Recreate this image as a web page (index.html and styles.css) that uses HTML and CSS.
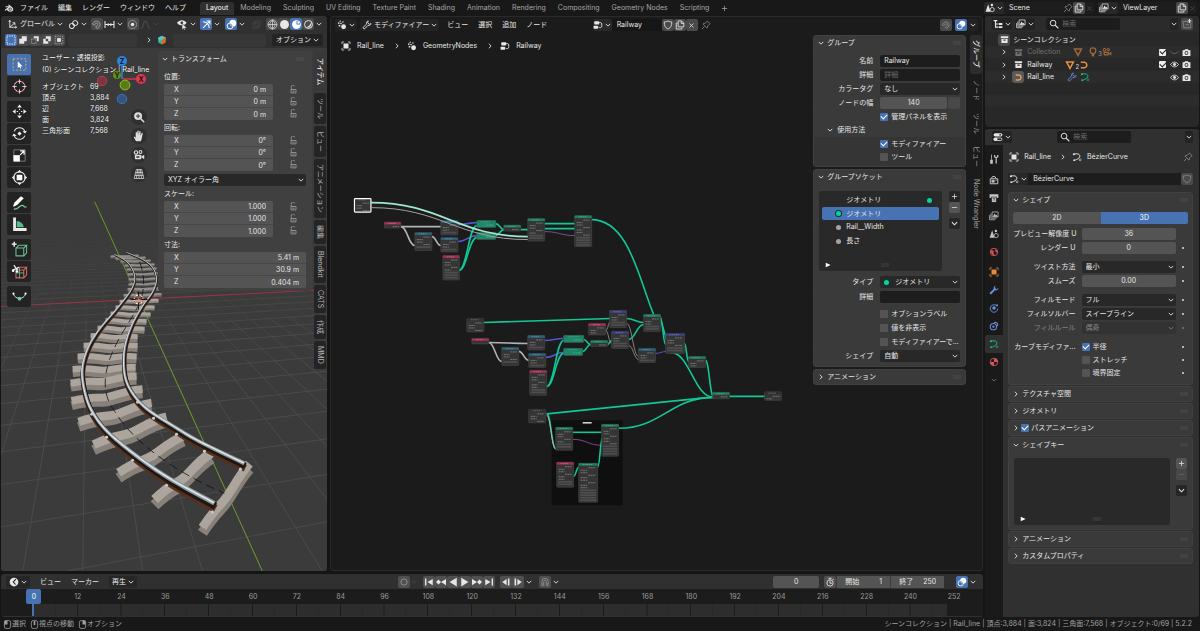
FILE: index.html
```html
<!DOCTYPE html>
<html lang="ja">
<head>
<meta charset="utf-8">
<title>Blender</title>
<link rel="stylesheet" href="styles.css">
</head>
<body>
<svg class="sprite" aria-hidden="true">
  <defs>
  <symbol id="blender" viewBox="0 0 16 16"><path d="M1 11.2 7 6.6H2.6V5.2h6.2L6.6 3.4l1.1-1 5.4 4.2c3.3 2.7 1.6 7.4-3.2 7.4-2.900 0-4.600-1.600-4.900-3.600L2.200 12.400z" fill="currentColor"/><circle cx="9.800" cy="9.700" r="2.600" fill="#181818"/><circle cx="9.800" cy="9.700" r="1.500" fill="currentColor"/></symbol>
  <symbol id="chev" viewBox="0 0 16 16"><path d="M2 5l6 6 6-6" fill="none" stroke="currentColor" stroke-width="2.400"/></symbol>
  <symbol id="chevr" viewBox="0 0 16 16"><path d="M5 2l6 6-6 6" fill="none" stroke="currentColor" stroke-width="2.400"/></symbol>
  <symbol id="axes" viewBox="0 0 16 16"><path d="M4 2v10h10M4 12l7-6M2.500 4 4 2l1.500 2M12 10.500l2 1.500-2 1.500M8 5.500h3.500V9" fill="none" stroke="currentColor" stroke-width="1.300"/></symbol>
  <symbol id="pivot" viewBox="0 0 16 16"><g transform="rotate(-40 8 8)" fill="none" stroke="currentColor" stroke-width="1.400"><circle cx="4.800" cy="8" r="3.600"/><circle cx="11.200" cy="8" r="3.600"/></g><circle cx="8" cy="8" r="1.300" fill="currentColor"/></symbol>
  <symbol id="magnet" viewBox="0 0 16 16"><path d="M2 7 5 4a5 5 0 0 1 7 7l-3 3-2.200-2.200 3-3a1.900 1.900 0 0 0-2.600-2.600l-3 3z" fill="none" stroke="currentColor" stroke-width="1.500"/></symbol>
  <symbol id="magnet2" viewBox="0 0 16 16"><path d="M3 13.500V7a5 5 0 0 1 10 0v6.500h-3V7a2 2 0 0 0-4 0v6.500zM3 11h3M10 11h3" fill="none" stroke="currentColor" stroke-width="1.400"/></symbol>
  <symbol id="incr" viewBox="0 0 16 16"><path d="M1.500 3v10M14.500 3v10M1.500 8h13M6 6v4M10 6v4" fill="none" stroke="currentColor" stroke-width="1.600"/></symbol>
  <symbol id="prop" viewBox="0 0 16 16"><circle cx="8" cy="8" r="6" fill="none" stroke="currentColor" opacity=".6"/><circle cx="8" cy="8" r="2.600" fill="currentColor"/></symbol>
  <symbol id="fall" viewBox="0 0 16 16"><path d="M1 14c5-1 3-11 7-11s2 10 7 11" fill="none" stroke="currentColor" stroke-width="1.500"/></symbol>
  <symbol id="vis" viewBox="0 0 16 16"><path d="M0 5.500c3.500-5 10.500-5 14 0-3.500 5-10.500 5-14 0z" fill="currentColor"/><circle cx="7" cy="5.500" r="1.900" fill="#303030"/><path d="M7.500 6.500l7 6.500-3.500.3 1 2.700h-1.800l-1-2.500-2 2z" fill="currentColor" stroke="#303030" stroke-width=".7"/></symbol>
  <symbol id="gizmo" viewBox="0 0 16 16"><path d="M3 13 12.500 3.500M8 3h5v5M3 4c5 0 9 4 9 9" fill="none" stroke="currentColor" stroke-width="1.600"/></symbol>
  <symbol id="overlay" viewBox="0 0 16 16"><circle cx="10" cy="6" r="4.900" fill="currentColor"/><circle cx="6" cy="10" r="4.300" fill="#4772b3" fill-opacity=".55" stroke="currentColor" stroke-width="1.400"/></symbol>
  <symbol id="xray" viewBox="0 0 16 16"><path d="M5.500 2.500h8v8h-8zM2.500 5.500h8v8h-8z" fill="none" stroke="currentColor"/></symbol>
  <symbol id="wire" viewBox="0 0 16 16"><path d="M8 1.500a6.500 6.500 0 1 0 0 13 6.500 6.500 0 1 0 0-13M1.500 8h13M8 1.500v13M8 1.500c-5 4-5 9 0 13M8 1.500c5 4 5 9 0 13" fill="none" stroke="currentColor"/></symbol>
  <symbol id="solid" viewBox="0 0 16 16"><circle cx="8" cy="8" r="6.500" fill="currentColor"/></symbol>
  <symbol id="matp" viewBox="0 0 16 16"><circle cx="8" cy="8" r="5.800" fill="none" stroke="currentColor" stroke-width="1.400"/><path d="M8 2v6h6a6 6 0 1 1-6-6z" fill="currentColor"/><circle cx="10.500" cy="5.500" r="1.500" fill="currentColor"/></symbol>
  <symbol id="rend" viewBox="0 0 16 16"><circle cx="8" cy="8" r="5.800" fill="none" stroke="currentColor" stroke-width="1.400"/><path d="M12 4a6 6 0 0 1-8 8c4 0 7-4 8-8z" fill="currentColor"/></symbol>
  <symbol id="box" viewBox="0 0 16 16"><rect x="1.500" y="1.500" width="13" height="13" fill="none" stroke="currentColor" stroke-width="1.500" stroke-dasharray="2 1.700"/></symbol>
  <symbol id="m1" viewBox="0 0 16 16"><path d="M6 2h8v8h-4v4H2V6h4z" fill="currentColor"/></symbol>
  <symbol id="m2" viewBox="0 0 16 16"><path d="M6 2h8v8h-3V5H6z" fill="currentColor"/><path d="M2.500 6.500h7v7h-7z" fill="none" stroke="currentColor" stroke-dasharray="1.500"/></symbol>
  <symbol id="m3" viewBox="0 0 16 16"><path d="M6 2h8v8h-4v4H2V6h4zM6 6v4h4V6z" fill="currentColor" fill-rule="evenodd"/></symbol>
  <symbol id="m4" viewBox="0 0 16 16"><rect x="5" y="5" width="6" height="6" fill="currentColor"/><rect x="2" y="2" width="12" height="12" fill="none" stroke="currentColor" stroke-dasharray="1.800"/></symbol>
  <symbol id="tselect" viewBox="0 0 24 24"><rect x="3" y="4" width="18" height="16" fill="none" stroke="#e8b13c" stroke-width="1.300" stroke-dasharray="3 2"/><path d="M9.500 7.500v9.500l2.300-2 1.200 2.700 1.500-.7-1.200-2.600h3z" fill="#fff"/></symbol>
  <symbol id="tcursor" viewBox="0 0 24 24"><circle cx="12" cy="12" r="7.500" fill="none" stroke="#fff" stroke-width="1.400"/><circle cx="12" cy="12" r="7.500" fill="none" stroke="#d9474f" stroke-width="1.400" stroke-dasharray="3 3"/><path d="M12 2v6M12 16v6M2 12h6M16 12h6" stroke="#ddd" stroke-width="1.300"/></symbol>
  <symbol id="tmove" viewBox="0 0 24 24"><path d="M12 2l3.300 4.500H8.700zM12 22l3.300-4.500H8.700zM2 12l4.500 3.300V8.700zM22 12l-4.500 3.300V8.700z" fill="#eee"/><path d="M12 8v2M12 14v2M8 12h2M14 12h2" stroke="#eee" stroke-width="1.500"/></symbol>
  <symbol id="trot" viewBox="0 0 24 24"><path d="M4.500 9a8 8 0 0 1 15 0M19.500 15a8 8 0 0 1-15 0" fill="none" stroke="#eee" stroke-width="1.500"/><path d="M22.500 8l-2.500 4-4-3zM1.500 16l2.500-4 4 3zM12 9l3 3-3 3-3-3z" fill="#eee"/></symbol>
  <symbol id="tscale" viewBox="0 0 24 24"><path d="M4 4h16v16H4z" fill="none" stroke="#999"/><rect x="3.500" y="11.500" width="9" height="9" fill="#fff"/><path d="M13 11l5-5M13 5.500h5.500V11" fill="none" stroke="#fff" stroke-width="1.600"/></symbol>
  <symbol id="ttrans" viewBox="0 0 24 24"><circle cx="12" cy="12" r="8" fill="none" stroke="#eee" stroke-width="1.500"/><rect x="8" y="8" width="8" height="8" rx="1" fill="#fff"/><path d="M12 1l3 4H9zM12 23l3-4H9zM1 12l4 3V9zM23 12l-4 3V9z" fill="#eee"/></symbol>
  <symbol id="tannot" viewBox="0 0 24 24"><path d="M3 17l2-5 9-9 4 3-9 9-5 3z" fill="#fff"/><path d="M4 21c6 2 8-6 12-5s2 4 6 2" fill="none" stroke="#79c798" stroke-width="1.700"/></symbol>
  <symbol id="tmeas" viewBox="0 0 24 24"><path d="M3 2h4v15h15v4H3z" fill="#e9e9e9"/><path d="M8 7a10 10 0 0 1 10 9H8z" fill="#58b98a"/></symbol>
  <symbol id="tadd" viewBox="0 0 24 24"><path d="M7 10h11v11H7zM7 10l4-4h11l-4 4M22 6v11l-4 4" fill="none" stroke="#69bd91" stroke-width="1.500"/><path d="M4.500 1v7M1 4.500h7" stroke="#fff" stroke-width="1.800"/></symbol>
  <symbol id="tcut" viewBox="0 0 24 24"><path d="M7 10h11v11H7zM7 10l4-4h11l-4 4M22 6v11l-4 4" fill="none" stroke="#d0675e" stroke-width="1.500"/><path d="M12 6v15M7 14h11" stroke="#69bd91" stroke-width="1.200"/><path d="M2 10c3-1 6-2 9-4M4 3l5 7" stroke="#fff" stroke-width="1.500"/><circle cx="3" cy="11" r="1.800" fill="#fff"/><circle cx="8.500" cy="12" r="1.800" fill="#fff"/></symbol>
  <symbol id="tpen" viewBox="0 0 24 24"><path d="M3 8c4 9 14 9 18 0" fill="none" stroke="#ddd" stroke-width="1.400"/><circle cx="3.500" cy="8" r="1.500" fill="#fff"/><circle cx="20.500" cy="8" r="1.500" fill="#fff"/><circle cx="12" cy="15" r="2.700" fill="#5fd39b"/></symbol>
  <symbol id="zoomp" viewBox="0 0 16 16"><circle cx="6.800" cy="6.800" r="5.300" fill="currentColor"/><path d="M10.500 10.500 15 15" stroke="currentColor" stroke-width="2"/><path d="M6.800 4v5.600M4 6.800h5.600" stroke="#333" stroke-width="1.300"/></symbol>
  <symbol id="hand" viewBox="0 0 16 16"><path d="M4 15 1 9.500c.6-1 1.600-.6 2.600.7V3.500c.2-1 1.500-1 1.700 0V7l.5-5.500c.3-.9 1.500-.9 1.700 0V7l1-5c.4-.8 1.500-.6 1.600.3L10 7.500l1.500-3.500c.5-.7 1.500-.4 1.500.5L11.500 12 10.500 15z" fill="currentColor"/></symbol>
  <symbol id="mcam" viewBox="0 0 16 16"><g fill="currentColor"><circle cx="4" cy="4.500" r="3"/><circle cx="10" cy="4" r="2.600"/><rect x="2.500" y="7.500" width="8.500" height="6" rx="1"/><path d="M11 10l4-2.500v6L11 11z"/></g><circle cx="4" cy="4.500" r="1.500" fill="#333"/><circle cx="10" cy="4" r="1.200" fill="#333"/><path d="M4.500 9.500h4v2h-4z" fill="#333"/></symbol>
  <symbol id="pgrid" viewBox="0 0 16 16"><path d="M4.500 2h7l3 12h-13zM3.500 6h9M2.500 10h11M8 2v12M6.300 2 4.500 14M9.700 2l1.800 12" fill="none" stroke="currentColor" stroke-width="1"/></symbol>
  <symbol id="lock" viewBox="0 0 16 16"><path d="M4 8V4a3 3 0 0 1 6-1.500M3.500 8h9v6h-9zM6 11h4" fill="none" stroke="currentColor" stroke-width="1.300"/></symbol>
  <symbol id="grip" viewBox="0 0 16 8"><path d="M1 2h14M1 6h14" stroke="currentColor" stroke-width="2" stroke-dasharray="2 2"/></symbol>
  <symbol id="geo" viewBox="0 0 16 16"><g fill="currentColor"><circle cx="10.500" cy="10.800" r="3.900"/><circle cx="4" cy="9" r="1.500"/><circle cx="2.800" cy="5" r="1.300"/><circle cx="6.500" cy="5.500" r="1.300"/><circle cx="5" cy="2" r="1.100"/><circle cx="9.500" cy="3" r="1.200"/></g></symbol>
  <symbol id="wrench" viewBox="0 0 16 16"><path d="M10 1.500c-2.500.5-3.500 3-2.500 5L2 11.500c-1 1.500 1 3.500 2.500 2.500L9.500 8.500c2.500 1 4.800-.5 5-3L12 7 9 4.500z" fill="none" stroke="currentColor" stroke-width="1.400"/></symbol>
  <symbol id="wrenchf" viewBox="0 0 16 16"><path d="M11 1c-3 .3-4.500 3-3.500 5.500L1.500 12c-1 1.800 1 3.500 2.500 2.500l5.500-6c3 1 5.500-1 5.500-4L12 7 9.300 4z" fill="currentColor"/></symbol>
  <symbol id="ntree" viewBox="0 0 16 16"><rect x="2" y="2" width="8" height="5" rx="1" fill="currentColor"/><rect x="1" y="9" width="7" height="5" rx="1" fill="currentColor"/><path d="M10 4c4 0 4 1 4 4s0 5-5 4" fill="none" stroke="currentColor" stroke-width="1.500"/></symbol>
  <symbol id="shield" viewBox="0 0 16 16"><path d="M8 1.500c2 1.300 4 1.500 6 1.500 0 6-1 9-6 11.500C3 12 2 9 2 3c2 0 4-.2 6-1.500z" fill="none" stroke="currentColor" stroke-width="1.300"/></symbol>
  <symbol id="dup" viewBox="0 0 16 16"><path d="M5 4V1.500h5.500L14 5v6H5zM10 1.500V5.500h4M4.500 5H2v9.500h9V12" fill="none" stroke="currentColor" stroke-width="1.400"/></symbol>
  <symbol id="x" viewBox="0 0 16 16"><path d="M3.500 3.500l9 9M12.500 3.500l-9 9" stroke="currentColor" stroke-width="1.800"/></symbol>
  <symbol id="pin" viewBox="0 0 16 16"><path d="M10 1.500 14.500 6l-1.500 1-2.500 2.500V12l-1 1L3 6.500l1-1h2.500L9 3zM5.500 10.500 1.500 14.500" fill="none" stroke="currentColor" stroke-width="1.300"/></symbol>
  <symbol id="obj" viewBox="0 0 16 16"><rect x="4" y="4" width="8" height="8" fill="currentColor"/><path d="M1.500 5V1.500H5M11 1.500h3.500V5M14.500 11v3.500H11M5 14.500H1.500V11" fill="none" stroke="currentColor" stroke-width="1.200"/></symbol>
  <symbol id="plus" viewBox="0 0 16 16"><path d="M8 2v12M2 8h12" stroke="currentColor" stroke-width="1.700"/></symbol>
  <symbol id="minus" viewBox="0 0 16 16"><path d="M2 8h12" stroke="currentColor" stroke-width="1.700"/></symbol>
  <symbol id="conesphere" viewBox="0 0 16 16"><path d="M5 2 9 14H1z" fill="currentColor"/><circle cx="11.500" cy="10.500" r="3.300" fill="none" stroke="currentColor" stroke-width="1.300"/><circle cx="11" cy="3" r="2" fill="currentColor"/></symbol>
  <symbol id="layers" viewBox="0 0 16 16"><path d="M5 1.500h9.500v8H5zM3 4v7.500h9M1 6.500V14h9" fill="none" stroke="currentColor" stroke-width="1.200"/><path d="M6 9l3-5 2 3 1-1 2 3z" fill="currentColor"/></symbol>
  <symbol id="outl" viewBox="0 0 16 16"><path d="M1 2.500h6M4 2.500v10.500h4M4 8h4" fill="none" stroke="currentColor" stroke-width="1.800"/><path d="M9 6.500h6v3H9zM9 11.500h6v3H9z" fill="currentColor"/></symbol>
  <symbol id="search" viewBox="0 0 16 16"><circle cx="6.500" cy="6.500" r="4.500" fill="none" stroke="currentColor" stroke-width="1.500"/><path d="M10 10l5 5" stroke="currentColor" stroke-width="1.700"/></symbol>
  <symbol id="arch" viewBox="0 0 16 16"><path d="M1.500 2h13v3.500h-13zM2.500 6.500h11V14h-11zM6 8v2h4V8z" fill="currentColor" fill-rule="evenodd"/></symbol>
  <symbol id="newcol" viewBox="0 0 16 16"><path d="M1.500 4h7v1.500H14V14H2.500V7h-1zM6 9h5" fill="none" stroke="currentColor" stroke-width="1.200"/><path d="M12 0v6M9 3h6" stroke="#fff" stroke-width="1.300"/></symbol>
  <symbol id="tri" viewBox="0 0 16 16"><path d="M2.500 3h11L8 13.500z" fill="none" stroke="currentColor" stroke-width="2.400"/></symbol>
  <symbol id="bulb" viewBox="0 0 16 16"><circle cx="8" cy="6" r="4.500" fill="none" stroke="currentColor" stroke-width="2"/><path d="M6 11h4v4H6z" fill="currentColor"/></symbol>
  <symbol id="curve" viewBox="0 0 16 16"><path d="M3 3.500h5a4.500 4.500 0 0 1 0 9H3" fill="none" stroke="currentColor" stroke-width="2.400"/></symbol>
  <symbol id="curved" viewBox="0 0 16 16"><path d="M3 3.500c7-2 11 1 9 5-1 2-4 3-7 4.500" fill="none" stroke="currentColor" stroke-width="1.600"/><circle cx="3" cy="3.500" r="1.600" fill="currentColor"/><circle cx="13" cy="12.500" r="1.500" fill="none" stroke="currentColor"/><circle cx="3.500" cy="13" r="1.500" fill="currentColor"/></symbol>
  <symbol id="eye" viewBox="0 0 16 16"><path d="M1 8c3.500-5.500 10.500-5.500 14 0-3.500 5.500-10.500 5.500-14 0z" fill="none" stroke="currentColor" stroke-width="1.600"/><circle cx="8" cy="8" r="2.600" fill="currentColor"/></symbol>
  <symbol id="eyec" viewBox="0 0 16 16"><path d="M1 6c3.500 5 10.500 5 14 0" fill="none" stroke="currentColor" stroke-width="1.500"/></symbol>
  <symbol id="cam" viewBox="0 0 16 16"><path d="M1 4h3l1.500-2h5L12 4h3v10H1z" fill="currentColor"/><circle cx="8" cy="8.800" r="3.400" fill="#2b2b2b"/><circle cx="8" cy="8.800" r="2" fill="currentColor"/></symbol>
  <symbol id="sliders" viewBox="0 0 16 16"><rect x="1" y="2" width="14" height="5" rx="2.500" fill="currentColor"/><rect x="1.600" y="9.600" width="12.800" height="4" rx="2" fill="none" stroke="currentColor" stroke-width="1.300"/><rect x="1" y="9" width="6" height="5" rx="2" fill="currentColor"/><circle cx="11.500" cy="4.500" r="1.500" fill="#2b2b2b"/></symbol>
  <symbol id="tools" viewBox="0 0 16 16"><path d="M4 1v8M2.500 9.500h3V15h-3z" fill="currentColor" stroke="currentColor" stroke-width="1.200"/><path d="M9 1.500v3l2.500 2 2.500-2v-3M11.500 6v9" fill="none" stroke="currentColor" stroke-width="2"/></symbol>
  <symbol id="rtab" viewBox="0 0 16 16"><path d="M2 6h12v8H2zM4 5l1.500-2.500h4L11 5" fill="none" stroke="currentColor" stroke-width="1.600"/><path d="M4.500 8.500h4v3h-4zM10 8.500h2.500" stroke="currentColor" fill="currentColor"/></symbol>
  <symbol id="print" viewBox="0 0 16 16"><path d="M1 2h14v6h-2.500V6h-9v2H1z" fill="currentColor"/><rect x="4.500" y="7" width="7" height="7.500" fill="currentColor"/><path d="M6 9l4 0M6.500 12l1.500-1.500 2 1.500" stroke="#222" fill="none"/></symbol>
  <symbol id="world" viewBox="0 0 16 16"><circle cx="8" cy="8" r="6" fill="none" stroke="currentColor" stroke-width="1.500"/><path d="M3 5l5 1-1 3 2 4-4-1-2-4zM10 3l3 3-1 3-2-2z" fill="currentColor"/></symbol>
  <symbol id="phys" viewBox="0 0 16 16"><circle cx="8" cy="8" r="2.800" fill="currentColor"/><path d="M13 5.500A6 6 0 1 0 14 9" fill="none" stroke="currentColor" stroke-width="1.500"/><circle cx="13" cy="3.500" r="1.500" fill="currentColor"/></symbol>
  <symbol id="cons" viewBox="0 0 16 16"><circle cx="7" cy="9" r="5" fill="none" stroke="currentColor" stroke-width="1.700"/><circle cx="7" cy="9" r="1.800" fill="currentColor"/><path d="M8 2.500c4-2 7 2 5.500 5.500" fill="none" stroke="currentColor" stroke-width="1.700"/></symbol>
  <symbol id="matb" viewBox="0 0 16 16"><circle cx="8" cy="8" r="6" fill="none" stroke="currentColor" stroke-width="1.400"/><path d="M8 8V2a6 6 0 0 1 6 6zM8 8v6a6 6 0 0 1-6-6z" fill="currentColor"/></symbol>
  <symbol id="clock" viewBox="0 0 16 16"><circle cx="8" cy="8" r="7" fill="currentColor"/><path d="M11 3.500 7 8l3.500 4" fill="none" stroke="#222" stroke-width="1.800"/></symbol>
  <symbol id="watch" viewBox="0 0 16 16"><circle cx="8" cy="9.500" r="5" fill="none" stroke="currentColor" stroke-width="1.400"/><path d="M8 6v4h3M5.500 2h5M8 2v2M12 3l2 2" fill="none" stroke="currentColor" stroke-width="1.400"/></symbol>
  <symbol id="rec" viewBox="0 0 16 16"><circle cx="8" cy="8" r="5" fill="none" stroke="currentColor" stroke-width="1.600"/></symbol>
  <symbol id="first" viewBox="0 0 16 16"><path d="M1.500 2.500h2.300v11H1.500zM14 3v10L5.500 8z" fill="currentColor"/></symbol>
  <symbol id="prevk" viewBox="0 0 16 16"><path d="M4 4l4 4-4 4-4-4zM16 3v10L8 8z" fill="currentColor"/></symbol>
  <symbol id="back" viewBox="0 0 16 16"><path d="M14 1v14L2.500 8z" fill="currentColor"/></symbol>
  <symbol id="stepb" viewBox="0 0 16 16"><path d="M9 3v10L2 8zM11 2.500h2.500v11H11z" fill="currentColor"/></symbol>
  <symbol id="mousel" viewBox="0 0 16 16"><rect x="2.500" y="1" width="11" height="14" rx="3" fill="none" stroke="currentColor" stroke-width="1.400"/><path d="M2.500 1H8v7H2.500z" fill="currentColor"/></symbol>
  <symbol id="mousem" viewBox="0 0 16 16"><rect x="2.500" y="1" width="11" height="14" rx="3" fill="none" stroke="currentColor" stroke-width="1.400"/><path d="M6.500 2h3v7h-3z" fill="currentColor"/></symbol>
  <symbol id="mouser" viewBox="0 0 16 16"><rect x="2.500" y="1" width="11" height="14" rx="3" fill="none" stroke="currentColor" stroke-width="1.400"/><path d="M8 1h5.500v7H8z" fill="currentColor"/></symbol>
  <symbol id="play" viewBox="0 0 16 16"><path d="M2 2l13 6-13 6z" fill="currentColor"/></symbol>
  </defs>
</svg>

<header class="topbar">
  <svg class="i"><use href="#blender"/></svg>
  <nav class="menus"><button>ファイル</button><button>編集</button><button>レンダー</button><button>ウィンドウ</button><button>ヘルプ</button></nav>
  <nav class="tabs"><button class="on">Layout</button><button>Modeling</button><button>Sculpting</button><button>UV Editing</button><button>Texture Paint</button><button>Shading</button><button>Animation</button><button>Rendering</button><button>Compositing</button><button>Geometry Nodes</button><button>Scripting</button><button aria-label="追加"><svg class="i s"><use href="#plus"/></svg></button></nav>
  <div class="idbox"><button class="dd"><svg class="i"><use href="#conesphere"/></svg><svg class="c"><use href="#chev"/></svg></button><input aria-label="Scene" value="Scene"><svg class="i dim"><use href="#pin"/></svg><button class="lt" aria-label="複製"><svg class="i"><use href="#dup"/></svg></button><button class="off" aria-label="削除"><svg class="i s"><use href="#x"/></svg></button></div>
  <div class="idbox"><button class="dd"><svg class="i"><use href="#layers"/></svg><svg class="c"><use href="#chev"/></svg></button><input aria-label="ViewLayer" value="ViewLayer"><button class="lt" aria-label="複製"><svg class="i"><use href="#dup"/></svg></button><button class="off" aria-label="削除"><svg class="i s"><use href="#x"/></svg></button></div>
</header>

<main class="work">
<div class="left">
<div class="editors">
<section class="area view3d">
  <div class="hdr v3h">
    <button class="dd"><svg class="i"><use href="#axes"/></svg>グローバル<svg class="c"><use href="#chev"/></svg></button>
    <button class="dd"><svg class="i"><use href="#pivot"/></svg><svg class="c"><use href="#chev"/></svg></button>
    <span class="grp"><button class="lt dim"><svg class="i"><use href="#magnet"/></svg></button><button class="dd"><svg class="i"><use href="#incr"/></svg><svg class="c"><use href="#chev"/></svg></button></span>
    <span class="grp"><button class="lt"><svg class="i"><use href="#prop"/></svg></button><button class="off"><svg class="i"><use href="#fall"/></svg><svg class="c"><use href="#chev"/></svg></button></span>
    <span class="sp"></span>
    <button class="dd"><svg class="i"><use href="#vis"/></svg><svg class="c"><use href="#chev"/></svg></button>
    <span class="grp"><button class="blue"><svg class="i"><use href="#gizmo"/></svg></button><button class="dd"><svg class="c"><use href="#chev"/></svg></button></span>
    <span class="grp"><button class="blue"><svg class="i"><use href="#overlay"/></svg></button><button class="dd"><svg class="c"><use href="#chev"/></svg></button></span>
    <button class="off"><svg class="i"><use href="#xray"/></svg></button>
    <span class="grp"><button class="lt"><svg class="i"><use href="#wire"/></svg></button><button class="lt"><svg class="i"><use href="#solid"/></svg></button><button class="blue"><svg class="i"><use href="#matp"/></svg></button><button class="lt"><svg class="i"><use href="#rend"/></svg></button><button class="dd"><svg class="c"><use href="#chev"/></svg></button></span>
  </div>
  <div class="hdr toolh">
    <span class="grp modes"><button class="blue"><svg class="i"><use href="#box"/></svg></button><button class="lt"><svg class="i"><use href="#m1"/></svg></button><button class="lt"><svg class="i"><use href="#m2"/></svg></button><button class="lt"><svg class="i"><use href="#m3"/></svg></button><button class="lt"><svg class="i"><use href="#m4"/></svg></button></span>
    <span class="slot"></span>
    <svg class="c"><use href="#chevr"/></svg>
    <svg class="i" viewBox="0 0 16 16"><path d="M8 1 2 4v8l6 3z" fill="#29b98d"/><path d="M8 1l6 3v4L8 8 3 9 2 4z" fill="#4fc7c9"/><path d="M14 4v8l-6 3-1-7z" fill="#e8622c"/></svg>
    <span class="slot wide"></span>
    <button class="dark">オプション <svg class="c"><use href="#chev"/></svg></button>
  </div>
  <div class="canvas3d">
    <svg class="scene" id="viewport" viewBox="1 48 327 524" preserveAspectRatio="xMidYMid slice"></svg>
    <div class="toolbar">
      <div><button class="blue"><svg><use href="#tselect"/></svg></button><button><svg><use href="#tcursor"/></svg></button></div>
      <div><button><svg><use href="#tmove"/></svg></button><button><svg><use href="#trot"/></svg></button><button><svg><use href="#tscale"/></svg></button><button><svg><use href="#ttrans"/></svg></button></div>
      <div><button><svg><use href="#tannot"/></svg></button><button><svg><use href="#tmeas"/></svg></button></div>
      <div><button><svg><use href="#tadd"/></svg></button><button><svg><use href="#tcut"/></svg></button></div>
      <div><button><svg><use href="#tpen"/></svg></button></div>
    </div>
    <div class="info">
      <p>ユーザー・透視投影</p><p>(0) シーンコレクション | Rail_line</p>
      <dl><dt>オブジェクト</dt><dd>69</dd><dt>頂点</dt><dd>3,884</dd><dt>辺</dt><dd>7,668</dd><dt>面</dt><dd>3,824</dd><dt>三角形面</dt><dd>7,568</dd></dl>
    </div>
    <div class="nav">
      <svg class="axis" viewBox="0 0 54 56"><path d="M26 27 43 27" stroke="#d1364d" stroke-width="1.500"/><path d="M25 27V12" stroke="#3084de" stroke-width="1.500"/><circle cx="5" cy="29" r="4.700" fill="#7a3640" stroke="#c03a4c"/><circle cx="20" cy="23" r="4" fill="#5f8e14"/><circle cx="28" cy="33" r="4.900" fill="#5b7a1a" stroke="#8dc41a"/><circle cx="25" cy="47" r="4.700" fill="#34557f" stroke="#3a74bb"/><circle cx="25" cy="9" r="5" fill="#2f83e3"/><circle cx="44" cy="27" r="5" fill="#e0364f"/><text x="25" y="12">Z</text><text x="44" y="30">X</text><text x="20" y="26">Y</text></svg>
      <button><svg class="i"><use href="#zoomp"/></svg></button><button><svg class="i"><use href="#hand"/></svg></button><button><svg class="i"><use href="#mcam"/></svg></button><button><svg class="i"><use href="#pgrid"/></svg></button>
    </div>
    <aside class="side3d">
      <h3><svg class="c"><use href="#chev"/></svg>トランスフォーム<svg class="grip"><use href="#grip"/></svg></h3>
      <h4>位置:</h4>
      <div class="vec"><div><label><span>X</span><input value="0 m"></label><label><span>Y</span><input value="0 m"></label><label><span>Z</span><input value="0 m"></label></div><div class="locks"><svg><use href="#lock"/></svg><svg><use href="#lock"/></svg><svg><use href="#lock"/></svg></div></div>
      <h4>回転:</h4>
      <div class="vec"><div><label><span>X</span><input value="0°"></label><label><span>Y</span><input value="0°"></label><label><span>Z</span><input value="0°"></label></div><div class="locks"><svg><use href="#lock"/></svg><svg><use href="#lock"/></svg><svg><use href="#lock"/></svg></div></div>
      <span class="sel top2"><select aria-label="回転モード"><option>XYZ オイラー角</option></select><svg class="c"><use href="#chev"/></svg></span>
      <h4>スケール:</h4>
      <div class="vec"><div><label><span>X</span><input value="1.000"></label><label><span>Y</span><input value="1.000"></label><label><span>Z</span><input value="1.000"></label></div><div class="locks"><svg><use href="#lock"/></svg><svg><use href="#lock"/></svg><svg><use href="#lock"/></svg></div></div>
      <h4>寸法:</h4>
      <div class="vec"><div><label><span>X</span><input value="5.41 m"></label><label><span>Y</span><input value="30.9 m"></label><label><span>Z</span><input value="0.404 m"></label></div></div>
    </aside>
    <nav class="vtabs v3t"><button class="on">アイテム</button><button>ツール</button><button>ビュー</button><button>アニメーション</button><button>編集</button><button>Blendkit</button><button>CATS</button><button>作成</button><button>MMD</button></nav>
  </div>
</section>

<section class="area nodes">
  <svg class="scene" id="graph" viewBox="331 16 652 556" preserveAspectRatio="xMidYMid slice"></svg>
  <div class="hdr nh">
    <button class="dark"><svg class="i"><use href="#geo"/></svg><svg class="c"><use href="#chev"/></svg></button>
    <button class="dark"><svg class="i"><use href="#wrench"/></svg>モディファイアー<svg class="c"><use href="#chev"/></svg></button>
    <nav class="menus"><button>ビュー</button><button>選択</button><button>追加</button><button>ノード</button></nav>
    <span class="sp a"></span>
    <div class="idbox"><button class="dd"><svg class="i"><use href="#ntree"/></svg><svg class="c"><use href="#chev"/></svg></button><input aria-label="ノードツリー" value="Railway"><button class="lt"><svg class="i"><use href="#shield"/></svg></button><button class="lt"><svg class="i"><use href="#dup"/></svg></button><button class="lt"><svg class="i s"><use href="#x"/></svg></button></div>
    <svg class="i dim"><use href="#pin"/></svg>
    <span class="sp b"></span>
    <button class="lt dim"><svg class="i"><use href="#magnet"/></svg></button>
    <span class="grp"><button class="blue"><svg class="i"><use href="#overlay"/></svg></button><button class="dd"><svg class="c"><use href="#chev"/></svg></button></span>
  </div>
  <div class="nbody">
    <div class="crumbs"><svg class="i"><use href="#obj"/></svg>Rail_line<svg class="c"><use href="#chevr"/></svg><svg class="i"><use href="#geo"/></svg>GeometryNodes<svg class="c"><use href="#chevr"/></svg><svg class="i"><use href="#ntree"/></svg>Railway</div>
    <aside class="nside">
      <div class="panel"><h3><svg class="c"><use href="#chev"/></svg>グループ<svg class="grip"><use href="#grip"/></svg></h3>
        <div class="form">
          <label for="nm">名前</label><input id="nm" class="txt" value="Railway">
          <label for="ds">詳細</label><input id="ds" class="txt" placeholder="詳細">
          <label for="ct">カラータグ</label><span class="sel"><select id="ct"><option>なし</option></select><svg class="c"><use href="#chev"/></svg></span>
          <label for="nw">ノードの幅</label><span class="numx"><input id="nw" class="num" value="140"><button aria-label="リセット"></button></span>
          <label class="chk f"><input type="checkbox" checked>管理パネルを表示</label>
        </div>
        <h4 class="sub"><svg class="c"><use href="#chev"/></svg>使用方法</h4>
        <div class="form well"><label class="chk f"><input type="checkbox" checked>モディファイアー</label><label class="chk f"><input type="checkbox">ツール</label></div>
      </div>
      <div class="panel"><h3><svg class="c"><use href="#chev"/></svg>グループソケット<svg class="grip"><use href="#grip"/></svg></h3>
        <div class="listrow"><div class="list"><ul><li><i class="no"></i>ジオメトリ<i class="gr end"></i></li><li class="on"><i class="gr"></i>ジオメトリ</li><li><i></i>Rail__Width</li><li><i></i>長さ</li></ul><footer><svg class="c"><use href="#play"/></svg><svg class="grip"><use href="#grip"/></svg></footer></div>
        <div class="lbtns"><button class="dk"><svg class="i s"><use href="#plus"/></svg></button><button><svg class="i s"><use href="#minus"/></svg></button><button class="dk sepd"><svg class="i s"><use href="#chev"/></svg></button></div></div>
        <div class="form">
          <label for="tp">タイプ</label><span class="sel ico"><select id="tp"><option>ジオメトリ</option></select><i class="gr"></i><svg class="c"><use href="#chev"/></svg></span>
          <label for="d2" class="t1">詳細</label><input id="d2" class="txt t1">
          <label class="chk f t5"><input type="checkbox">オプションラベル</label><label class="chk f">
          <input type="checkbox">値を非表示</label><label class="chk f"><input type="checkbox">モディファイアーで...</label>
          <label for="sh">シェイプ</label><span class="sel"><select id="sh"><option>自動</option></select><svg class="c"><use href="#chev"/></svg></span>
        </div>
      </div>
      <div class="panel shut"><h3><svg class="c"><use href="#chevr"/></svg>アニメーション<svg class="grip"><use href="#grip"/></svg></h3></div>
    </aside>
    <nav class="vtabs nt"><button class="on">グループ</button><button>ノード</button><button>ツール</button><button>ビュー</button><button>Node Wrangler</button></nav>
  </div>
</section>
</div>

<section class="area timeline">
  <div class="hdr th">
    <button class="dark"><svg class="i"><use href="#clock"/></svg><svg class="c"><use href="#chev"/></svg></button>
    <nav class="menus"><button>ビュー</button><button>マーカー</button></nav><button class="dark">再生 <svg class="c"><use href="#chev"/></svg></button>
    <span class="sp a"></span>
    <span class="grp"><button class="lt dim"><svg class="i"><use href="#rec"/></svg></button><button class="off"><svg class="c"><use href="#chev"/></svg></button></span>
    <span class="grp"><button class="lt"><svg class="i"><use href="#first"/></svg></button><button class="lt"><svg class="i"><use href="#prevk"/></svg></button><button class="lt"><svg class="i"><use href="#back"/></svg></button><button class="lt"><svg class="i flip"><use href="#back"/></svg></button><button class="lt"><svg class="i flip"><use href="#prevk"/></svg></button><button class="lt"><svg class="i flip"><use href="#first"/></svg></button></span>
    <span class="grp"><button class="lt"><svg class="i"><use href="#stepb"/></svg></button><button class="lt"><svg class="i flip"><use href="#stepb"/></svg></button><button class="dd"><svg class="c"><use href="#chev"/></svg></button></span>
    <span class="grp"><button class="lt dim"><svg class="i"><use href="#magnet2"/></svg></button><button class="dd"><svg class="c"><use href="#chev"/></svg></button></span>
    <span class="sp b"></span>
    <input class="num w46" aria-label="現在のフレーム" value="0">
    <span class="grp"><button class="lt"><svg class="i"><use href="#watch"/></svg></button><label class="fr">開始<input value="1"></label><label class="fr">終了<input value="250"></label></span>
    <span class="grp"><button class="blue"><svg class="i"><use href="#overlay"/></svg></button><button class="dd"><svg class="c"><use href="#chev"/></svg></button></span>
  </div>
  <div class="ruler" id="ruler"></div>
</section>
</div>

<div class="right">
<section class="area outliner">
  <div class="hdr oh"><button class="dark"><svg class="i"><use href="#outl"/></svg><svg class="c"><use href="#chev"/></svg></button><button class="dark"><svg class="i"><use href="#layers"/></svg><svg class="c"><use href="#chev"/></svg></button><label class="srch"><svg class="i"><use href="#search"/></svg><input placeholder="検索" aria-label="検索"></label><button class="dark"><svg class="c"><use href="#chev"/></svg></button><button class="lt dim"><svg class="i"><use href="#newcol"/></svg></button></div>
  <div class="tree">
    <div class="row"><span class="ib"><svg class="i"><use href="#arch"/></svg></span>シーンコレクション</div>
    <div class="row child"><svg class="c"><use href="#chevr"/></svg><span class="ib faint"><svg class="i"><use href="#arch"/></svg></span><span class="faint nm">Collection</span><span class="or faded"><svg class="i"><use href="#tri"/></svg></span><span class="or faded"><svg class="i"><use href="#bulb"/></svg><sub>3</sub><svg class="i"><use href="#mcam"/></svg></span><span class="tg"><input type="checkbox" checked aria-label="除外"><svg class="i faint"><use href="#eyec"/></svg><svg class="i"><use href="#cam"/></svg></span></div>
    <div class="row child"><svg class="c"><use href="#chevr"/></svg><span class="ib"><svg class="i"><use href="#arch"/></svg></span><span class="nm">Railway</span><span class="or"><svg class="i"><use href="#tri"/></svg><sub>2</sub><svg class="i"><use href="#curve"/></svg></span><span class="tg"><input type="checkbox" checked aria-label="除外"><svg class="i"><use href="#eye"/></svg><svg class="i"><use href="#cam"/></svg></span></div>
    <div class="row child"><svg class="c"><use href="#chevr"/></svg><span class="ib act"><svg class="i"><use href="#curve"/></svg></span><span class="nm">Rail_line</span><span class="bl"><svg class="i"><use href="#wrench"/></svg></span><span class="gn"><svg class="i"><use href="#curved"/></svg></span><span class="tg"><svg class="i"><use href="#eye"/></svg><svg class="i"><use href="#cam"/></svg></span></div>
    <div class="row"></div><div class="row"></div><div class="row"></div>
  </div>
</section>
<section class="area props">
  <div class="hdr ph"><button class="dark"><svg class="i"><use href="#sliders"/></svg><svg class="c"><use href="#chev"/></svg></button><label class="srch"><svg class="i"><use href="#search"/></svg><input placeholder="検索" aria-label="検索"></label><button class="dark"><svg class="c"><use href="#chev"/></svg></button></div>
  <div class="pbody">
    <nav class="ptabs"><button><svg class="i"><use href="#tools"/></svg></button><button class="gap"><svg class="i"><use href="#rtab"/></svg></button><button><svg class="i"><use href="#print"/></svg></button><button><svg class="i"><use href="#layers"/></svg></button><button><svg class="i"><use href="#conesphere"/></svg></button><button class="rd"><svg class="i"><use href="#world"/></svg></button><button class="orr gap2"><svg class="i"><use href="#obj"/></svg></button><button class="bl"><svg class="i"><use href="#wrenchf"/></svg></button><button class="bl"><svg class="i"><use href="#phys"/></svg></button><button class="bl"><svg class="i"><use href="#cons"/></svg></button><button class="gn on"><svg class="i"><use href="#curved"/></svg></button><button class="rd"><svg class="i"><use href="#matb"/></svg></button><button class="faint"><svg class="c"><use href="#chev"/></svg></button></nav>
    <div class="pmain">
      <div class="crumbs"><svg class="i"><use href="#obj"/></svg>Rail_line<svg class="c"><use href="#chevr"/></svg><svg class="i"><use href="#curved"/></svg>BézierCurve<svg class="i dim push"><use href="#pin"/></svg></div>
      <div class="idbox big"><button class="dd"><svg class="i"><use href="#curved"/></svg><svg class="c"><use href="#chev"/></svg></button><input aria-label="データ名" value="BézierCurve"><button class="lt dim"><svg class="i"><use href="#shield"/></svg></button></div>
      <div class="panel"><h3><svg class="c"><use href="#chev"/></svg>シェイプ<svg class="grip"><use href="#grip"/></svg></h3>
        <div class="seg"><button>2D</button><button class="on">3D</button></div>
        <div class="pform">
          <label for="p1">プレビュー解像度 U</label><input id="p1" class="num" value="36"><b></b>
          <label for="p2">レンダー U</label><input id="p2" class="num" value="0"><b class="dot"></b>
          <hr>
          <label for="p3">ツイスト方法</label><span class="sel"><select id="p3"><option>最小</option></select><svg class="c"><use href="#chev"/></svg></span><b class="dot"></b>
          <label for="p4">スムーズ</label><input id="p4" class="num" value="0.00"><b class="dot"></b>
          <hr>
          <label for="p5">フィルモード</label><span class="sel"><select id="p5"><option>フル</option></select><svg class="c"><use href="#chev"/></svg></span><b class="dot"></b>
          <label for="p6">フィルソルバー</label><span class="sel"><select id="p6"><option>スイープライン</option></select><svg class="c"><use href="#chev"/></svg></span><b class="dot"></b>
          <label for="p7" class="dis">フィルルール</label><span class="sel dis"><select id="p7"><option>偶奇</option></select><svg class="c"><use href="#chev"/></svg></span><b class="dot dis"></b>
          <hr>
          <span class="lb">カーブモディファ...</span><label class="chk"><input type="checkbox" checked>半径</label><b class="dot"></b>
          <label class="chk f2 up"><input type="checkbox">ストレッチ</label><b class="dot up"></b>
          <label class="chk f2 up"><input type="checkbox">境界固定</label><b class="dot up"></b>
        </div>
      </div>
      <div class="panel shut"><h3><svg class="c"><use href="#chevr"/></svg>テクスチャ空間<svg class="grip"><use href="#grip"/></svg></h3></div>
      <div class="panel shut"><h3><svg class="c"><use href="#chevr"/></svg>ジオメトリ<svg class="grip"><use href="#grip"/></svg></h3></div>
      <div class="panel shut"><h3><svg class="c"><use href="#chevr"/></svg><label class="chk"><input type="checkbox" checked>パスアニメーション</label><svg class="grip"><use href="#grip"/></svg></h3></div>
      <div class="panel"><h3><svg class="c"><use href="#chev"/></svg>シェイプキー<svg class="grip"><use href="#grip"/></svg></h3>
        <div class="listrow keys"><div class="list"><ul></ul><footer><svg class="c"><use href="#play"/></svg><svg class="grip"><use href="#grip"/></svg></footer></div>
        <div class="lbtns"><button><svg class="i s"><use href="#plus"/></svg></button><button class="fade"><svg class="i s"><use href="#minus"/></svg></button><button class="dk sepd"><svg class="i s"><use href="#chev"/></svg></button></div></div>
      </div>
      <div class="panel shut"><h3><svg class="c"><use href="#chevr"/></svg>アニメーション<svg class="grip"><use href="#grip"/></svg></h3></div>
      <div class="panel shut"><h3><svg class="c"><use href="#chevr"/></svg>カスタムプロパティ<svg class="grip"><use href="#grip"/></svg></h3></div>
    </div>
  </div>
</section>
</div>
</main>
<footer class="status"><span class="ms"><svg class="i"><use href="#mousel"/></svg>選択</span><span class="ms"><svg class="i"><use href="#mousem"/></svg>視点の移動</span><span class="ms"><svg class="i"><use href="#mouser"/></svg>オプション</span><span class="stat">シーンコレクション | Rail_line | 頂点:3,884 | 面:3,824 | 三角面:7,568 | オブジェクト:0/69 | 5.2.2</span></footer>
<script src="scene.js"></script>
</body>
</html>
```
FILE: styles.css
```css
* { box-sizing: border-box; }
html, body { height: 100%; margin: 0; }
body { display: flex; flex-direction: column; background: #151515; color: #e6e6e6; font: 7px/12px Inter, "Noto Sans CJK JP", sans-serif; overflow: hidden; }
.sprite { position: absolute; width: 0; height: 0; }
svg { display: block; flex: none; }
button, input, select { font: inherit; color: inherit; background: none; border: 0; margin: 0; padding: 0; min-width: 0; border-radius: 2px; }
h3, h4, p, dl, dd, ul { margin: 0; padding: 0; font-weight: 400; font-size: 7px; }
.i { width: 10px; height: 10px; }
.i.s { width: 7px; height: 7px; }
.c { width: 6px; height: 6px; }
.grip { width: 8px; height: 4px; color: #626262; }
.flip { transform: scaleX(-1); }
.dim { color: #8d8d8d; }
.faint { color: #707070; }
.bl { color: #6a8fe0; }
.gn { color: #1fbf86; }
.rd { color: #d0575c; }
.orr { color: #e08a3c; }
.or { color: #e58f3e; }

.topbar { height: 16px; flex: none; display: flex; align-items: center; padding: 0 3px 0 4px; background: #181818; }
.menus { display: flex; }
.menus button { padding: 0 5px; white-space: nowrap; }
.topbar .menus { margin-left: 1px; margin-right: 9px; }
.tabs { display: flex; margin-right: auto; color: #a6a6a6; }
.tabs button { padding: 0 6px; height: 13px; white-space: nowrap; display: flex; align-items: center; }
.tabs .on { background: #303030; color: #fff; border-radius: 3px 3px 0 0; }
.idbox { display: flex; align-items: center; height: 12px; background: #1d1d1d; border-radius: 2px; }
.topbar .idbox + .idbox { margin-left: 4px; }
.idbox input { width: 59px; padding: 0 5px; }
.idbox .dd { background: #282828; }
.topbar .idbox > button { padding: 0 1px; display: flex; gap: 2px; }
.topbar .idbox:last-child input { width: 58px; }

.work { flex: 1; min-height: 0; display: flex; gap: 2px; padding: 0 1px; }
.left { flex: 983; min-width: 0; display: flex; flex-direction: column; gap: 3px; }
.editors { flex: 1; min-height: 0; display: flex; gap: 3px; }
.right { flex: 214; min-width: 0; display: flex; flex-direction: column; gap: 2px; }
.area { border-radius: 3px; overflow: hidden; position: relative; min-width: 0; }
.hdr { display: flex; align-items: center; height: 16px; padding: 0 3px; gap: 3px; position: relative; flex: none; }
.hdr button, .idbox button { display: flex; align-items: center; justify-content: center; height: 12px; gap: 2px; padding: 0 1px; white-space: nowrap; flex: none; }
.hdr .menus button { padding: 0 5px; }
.lt { background: #4a4a4a; }
.blue { background: #4772b3; color: #fff; }
.dark { background: #232323; }
.hdr .dark { padding: 0 3px; }
.off { color: #4a4a4a; }
.grp { display: flex; align-items: center; gap: 0; }
.grp > .dd { width: 10px; }
.sp { flex: 1; }

.view3d { flex: 327; display: flex; flex-direction: column; background: #303030; }
.v3h .grp > .dd:has(.i) { width: auto; }
.v3h { gap: 3px; padding: 0 3px 0 5px; }
.v3h .i { width: 11px; height: 11px; }
.v3h .grp > .blue, .v3h .grp > .lt { padding: 0; width: 12px; }
.toolh { padding: 0 4px; }
.modes button { width: 12px; }
.slot { flex: 72; height: 13px; background: #373737; border-radius: 3px; }
.slot + .c { margin: 0 2px 0 6px; }
.slot.wide { flex: 98; margin: 0 3px; }
.toolh .dark { padding: 0 4px; }
.canvas3d { flex: 1; position: relative; display: flex; align-items: flex-start; background: #3b3b3b; }
.scene { position: absolute; inset: 0; width: 100%; height: 100%; }
.toolbar { position: relative; margin: 6px 0 0 6px; display: flex; flex-direction: column; gap: 4px; }
.toolbar div { display: flex; flex-direction: column; gap: 1px; }
.toolbar button { width: 24px; height: 21px; display: flex; align-items: center; justify-content: center; background: #232323; }
.toolbar button.blue { background: #4772b3; }
.toolbar svg { width: 17px; height: 17px; }
.info { position: relative; flex: none; margin: 4px 0 0 11px; white-space: nowrap; width: 116px; color: #fff; text-shadow: 0 0 1px #000; }
.info dl { display: grid; grid-template-columns: 48px auto; line-height: 11px; margin-top: 5px; }
.info p { line-height: 12px; }
.nav { position: absolute; left: 96px; top: 4px; display: flex; flex-direction: column; align-items: center; width: 54px; }
.axis { width: 54px; height: 56px; margin-bottom: 1px; }
.axis text { font: bold 7px Inter, sans-serif; text-anchor: middle; fill: #17181c; }
.nav button { width: 16px; height: 16px; margin: 0 0 3px 29px; border-radius: 8px; background: #2f2f2f; display: flex; align-items: center; justify-content: center; color: #ddd; }
.nav .i { width: 12px; height: 12px; }
.side3d { position: relative; flex: 1; margin: 3px 2px 0 0; padding: 0 6px 3px; background: #404040; border-radius: 3px; min-width: 0; }
.side3d h3 { margin-left: -4px; }
h3 { display: flex; align-items: center; gap: 3px; height: 15px; padding: 0 2px; }
h3 .grip { margin-left: auto; }
.side3d h4 { line-height: 10px; margin: 3px 0 2px; }
.side3d h3 + h4 { margin-top: 6px; }
.vec { display: flex; }
.vec > div:first-child { flex: 1; display: flex; flex-direction: column; }
.vec label { display: flex; height: 12px; line-height: 11px; background: #545454; padding: 0 7px 0 10px; border-bottom: 1px solid #474747; }
.vec label:first-child { border-radius: 2px 2px 0 0; }
.vec label:last-child { border-radius: 0 0 2px 2px; border: 0; }
.vec input { flex: 1; width: 0; text-align: right; }
.locks { flex: none; width: 33px; padding-left: 7px; display: flex; flex-direction: column; align-items: center; gap: 3px; padding-top: 1px; color: #a8a8a8; }
.locks svg { width: 9px; height: 9px; }
.sel { display: grid; align-items: center; height: 12px; background: #282828; border-radius: 2px; min-width: 0; }
.sel > * { grid-area: 1 / 1; }
.sel select { appearance: none; width: 100%; height: 12px; padding: 0 4px; }
.sel .c { justify-self: end; margin-right: 2px; pointer-events: none; }
.top2 { margin-top: 3px; }
.vtabs { position: relative; display: flex; flex-direction: column; gap: 2px; flex: none; }
.vtabs button { writing-mode: vertical-rl; text-orientation: sideways; width: 12px; line-height: 12px; padding: 5px 0; background: #242424; color: #b5b5b5; border-radius: 2px; white-space: nowrap; }
.vtabs .on { background: #404040; color: #fff; }
.v3t { margin: 4px 1px 0 0; }
.v3t .on { background: #383838; padding: 6px 0; }

.nodes { flex: 653; background: #1b1b1b; display: flex; flex-direction: column; border: 1px solid #2a2a2a; }
.nh { padding: 0 4px; }
.nh .dark { padding: 0 2px; }
.nh .idbox { height: 12px; background: #161616; }
.nh .idbox button { width: 12px; }
.nh .idbox .dd { width: 19px; }
.nh .idbox input { width: 50px; }
.nh .sp.a { flex: 35; }
.nh .sp.b { flex: 227; }
.nh .grp .dd { background: #222; width: 11px; }
.nbody { flex: 1; position: relative; display: flex; align-items: flex-start; }
.crumbs { display: flex; align-items: center; gap: 6px; }
.crumbs .c { margin: 0 1px 0 4px; }
.nbody .crumbs { margin: 7px auto 0 10px; }
.nside { flex: none; width: 153px; margin: 2px 2px 0 0; display: flex; flex-direction: column; gap: 2px; }
.panel { background: #3a3a3a; border-radius: 3px; border: 1px solid #414141; }
.panel h3 { height: 14px; padding: 0 4px; gap: 3px; }
.form { display: grid; grid-template-columns: 59px minmax(0, 1fr); gap: 2px 7px; padding: 5px 5px 0 0; align-items: center; text-align: right; }
.form label { height: 12px; white-space: nowrap; }
.form .f { grid-column: 2; }
.chk { display: flex; align-items: center; gap: 3px; height: 12px; white-space: nowrap; text-align: left; }
h3 .chk { gap: 2px; margin-left: -1px; }
input[type="checkbox"] { appearance: none; width: 8px; height: 8px; background: #545454; border-radius: 1px; display: grid; place-items: center; flex: none; }
input[type="checkbox"]:checked { background: #4772b3; }
input[type="checkbox"]:checked::before { content: ""; width: 5px; height: 3px; border: solid #fff; border-width: 0 0 1px 1px; transform: rotate(-45deg); margin-bottom: 2px; }
.txt { height: 12px; background: #1d1d1d; padding: 0 4px; width: 100%; }
::placeholder { color: #6b6b6b; opacity: 1; }
.num { height: 12px; background: #545454; text-align: center; width: 100%; }
.numx { display: flex; gap: 1px; }
.numx button { width: 12px; background: #484848; flex: none; }
.sub { display: flex; align-items: center; gap: 4px; height: 14px; padding-left: 13px; }
.well { padding: 1px 5px 3px 0; row-gap: 1px; background: #353535; }
.listrow { display: flex; gap: 7px; padding: 7px 5px 0; }
.list { flex: 1; height: 80px; background: #292929; border-radius: 2px; padding: 2px 3px 0; display: flex; flex-direction: column; }
.list ul { list-style: none; flex: 1; }
.list li { display: flex; align-items: center; gap: 4px; height: 14px; padding: 0 6px 0 14px; border-radius: 2px; }
.list li.on { background: #4772b3; height: 13px; }
.list i, .sel i { width: 5px; height: 5px; margin-right: 1px; border-radius: 3px; background: #a3a3a3; flex: none; }
.list i.gr, .sel i.gr { background: #00d6a3; box-shadow: 0 0 0 1px #15332b; }
.list i.no { background: none; }
.list i.end { margin-left: auto; box-shadow: none; }
.list footer { display: flex; align-items: center; height: 12px; padding-left: 3px; color: #fff; }
.list footer .grip { margin: 0 auto; }
.lbtns { display: flex; flex-direction: column; width: 11px; }
.lbtns button { height: 11px; display: flex; align-items: center; justify-content: center; background: #545454; }
.lbtns .dk { background: #262626; }
.lbtns .sepd { margin-top: 5px; }
.lbtns .fade { background: #484848; color: #666; }
.sel.ico select { padding-left: 15px; }
.sel.ico i { margin-left: 4px; }
.t1 { margin-top: 1px; }
.t5 { margin-top: 3px; }
.nside .panel:nth-child(2) { padding-bottom: 4px; }
.nt { width: 14px; align-items: flex-end; margin-top: 2px; gap: 1px; }
.nt button { background: none; color: #9a9a9a; padding: 5px 0 6px; }
.nt .on { background: #2c2c2c; }

.timeline { background: #303030; flex: none; height: 43px; }
.th { height: 15px; padding: 0 5px; gap: 5px; }
.th .dark { background: #262626; }
.th .sp.a { flex: 26; }
.th .sp.b { flex: 21; }
.th .i { width: 10px; height: 10px; }
.th .lt { background: #505050; width: 12px; }
.w46 { width: 46px; flex: none; }
.fr { display: flex; align-items: center; height: 12px; background: #545454; padding: 0 8px; width: 54px; border-left: 1px solid #3c3c3c; white-space: nowrap; }
.fr input { width: 10px; flex: 1; text-align: right; }
.th .grp:last-child { margin-left: 7px; }
.ruler { display: grid; grid-template-columns: repeat(22, minmax(0, 1fr)); padding: 0 7px 0 11px; background: #1c1c1c; height: 27px; color: #9b9b9b; text-align: center; }
.tick { display: flex; flex-direction: column; }
.tick span { line-height: 15px; height: 15px; }
.tick i { height: 12px; border-right: 1px solid #292929; background: linear-gradient(90deg, #2d2d2d calc(50% - 1px), #1b1b1b 50%, #2d2d2d calc(50% + 1px)); }
.tick:first-child i { background: linear-gradient(90deg, #1c1c1c 50%, #2d2d2d 50%); }
.tick:last-child i { background: linear-gradient(90deg, #2d2d2d 33%, #1c1c1c 34%); border: 0; }
.tick.now span { align-self: center; width: 15px; background: #4772b3; color: #fff; border-radius: 2px; }
.tick.now i { display: flex; justify-content: center; }
.tick.now i::after { content: ""; width: 2px; background: #4772b3; }

.outliner { height: 111px; background: #282828; flex: none; display: flex; flex-direction: column; }
.oh, .ph { background: #2b2b2b; padding: 0 6px 0 7px; }
.srch { display: flex; align-items: center; gap: 3px; height: 12px; background: #1d1d1d; border-radius: 2px; padding: 0 3px; width: 74px; }
.srch input { flex: 1; }
.oh .srch { margin: 0 auto 0 8px; }
.oh .dark, .ph .dark { padding: 0 1px; }
.ph .srch { margin: 0 auto 0 42px; }
.tree { flex: 1; padding-top: 1px; }
.row { display: flex; align-items: center; height: 12px; padding: 0 8px 0 13px; gap: 3px; }
.row:nth-child(even) { background: #2c2c2c; }
.row.child { padding-left: 16px; gap: 5px; }
.row:first-child { height: 13px; }
.row:nth-child(3) { height: 13px; }
.ib { width: 12px; height: 12px; display: grid; place-items: center; border-radius: 3px; }
.row:first-child .ib { background: #4a4a4a; }
.ib .i { width: 9px; height: 9px; }
.ib.act { background: #5a5a5a; color: #e9a066; }
.nm { margin-left: -2px; }
.row .or, .row .bl, .row .gn { display: flex; align-items: center; margin-left: 8px; }
.row .or + .or { margin-left: 0; }
.row .gn { margin-left: -2px; }
.row sub { font-size: 6px; line-height: 6px; align-self: flex-end; color: #ddd; vertical-align: baseline; }
.faded { opacity: .6; }
.tg { margin-left: auto; display: flex; align-items: center; gap: 3px; }
.tg input[type="checkbox"] { width: 7px; height: 7px; margin-right: 1px; background: #eee; }
.tg input[type="checkbox"]:checked::before { border-color: #222; }
.tg .i { width: 9px; height: 9px; }

.props { flex: 1; background: #303030; display: flex; flex-direction: column; }
.ph { background: #303030; }
.pbody { flex: 1; display: flex; min-height: 0; }
.ptabs { width: 18px; background: #1a1a1a; padding-top: 5px; display: flex; flex-direction: column; flex: none; }
.ptabs button { height: 18px; display: flex; align-items: center; justify-content: center; border-radius: 2px 0 0 2px; }
.ptabs .gap { margin-top: 3px; }
.ptabs .gap2 { margin-top: 2px; }
.ptabs .on { background: #303030; }
.ptabs button:not([class]), .ptabs .gap { color: #c4c4c4; }
.pmain { flex: 1; min-width: 0; padding: 5px 6px 0 5px; display: flex; flex-direction: column; gap: 1px; }
.pmain .crumbs { height: 14px; gap: 5px; padding-left: 1px; }
.push { margin-left: auto; }
.idbox.big { margin: 8px 0 6px; }
.idbox.big input { flex: 1; }
.idbox.big .lt { width: 12px; }
.idbox.big .dd { width: 20px; }
.seg { display: flex; margin: 5px 4px 4px; }
.seg button { flex: 1; height: 12px; background: #545454; border-radius: 2px 0 0 2px; }
.seg .on { background: #4772b3; color: #fff; border-radius: 0 2px 2px 0; }
.pform { display: grid; grid-template-columns: minmax(0, 62fr) minmax(0, 94fr) 10px; column-gap: 6px; row-gap: 2px; padding: 0 0 5px 4px; align-items: center; }
.pform > label:not(.chk), .lb { text-align: right; white-space: nowrap; }
.pform .f2 { grid-column: 2; }
.pform hr { grid-column: 1 / -1; border: 0; margin: 0; height: 3px; }
.up { margin-top: -1px; }
.dot { width: 2px; height: 2px; background: #ddd; border-radius: 1px; }
.dis { opacity: .4; }
.shut h3 { height: 14px; }
.pmain .keys { padding: 6px 5px 4px; gap: 6px; }
.keys .list { height: 67px; }

.status { height: 14px; flex: none; display: flex; align-items: center; gap: 4px; padding: 0 8px 0 3px; background: #181818; color: #a0a0a0; white-space: nowrap; }
.status .i { width: 9px; height: 9px; }
.ms { display: flex; align-items: center; }
.stat { margin-left: auto; }
```
FILE: scene.js
```js
const NS = 'http://www.w3.org/2000/svg';
const add = (root, tag, attrs) => {
  const el = document.createElementNS(NS, tag);
  for (const k in attrs) el.setAttribute(k, attrs[k]);
  root.appendChild(el);
  return el;
};

/* Timeline ruler */
const ruler = document.getElementById('ruler');
for (let f = 0; f <= 252; f += 12) {
  const t = document.createElement('div');
  t.className = f ? 'tick' : 'tick now';
  t.innerHTML = `<span>${f}</span><i></i>`;
  ruler.appendChild(t);
}

/* 3D viewport: floor grid, each line cut to the visible area */
const sc = document.getElementById('viewport');
const mix = t => {
  const v = Math.round(59 + 20 * Math.max(0, Math.min(1, t)));
  return `rgb(${v},${v},${v})`;
};
for (let k = -24; k <= 15; k++) {
  if (!k) continue;
  const y = 188 + 1 / (0.0084 - 0.00042 * k);
  const yEnd = y + (205 - y) * 330 / 2000;
  add(sc, 'path', { d: `M0 ${y.toFixed(1)}L330 ${yEnd.toFixed(1)}`, stroke: mix((y - 225) / 130), 'stroke-width': 0.8 });
}
for (let k = -14; k <= 9; k++) {
  const slope = (175 + 60 * k) / 384;
  for (let y = 240; y < 572; y += 40) {
    const a = 88 + slope * (y - 188), b = 88 + slope * (y - 148);
    if (Math.max(a, b) < 0 || Math.min(a, b) > 330) continue;
    add(sc, 'path', { d: `M${a.toFixed(1)} ${y}L${b.toFixed(1)} ${y + 40}`, stroke: mix((y - 225) / 130), 'stroke-width': 0.8 });
  }
}
add(sc, 'path', { d: 'M0 307L330 290', stroke: '#a03245', 'stroke-width': 1 });
add(sc, 'path', { d: 'M95 202L263 572', stroke: '#6a9a26', 'stroke-width': 1 });

/* Sleepers: left end, right end, thickness */
const ties = [
  [111,257,139,256,3],[116,259,146,258,3],[121,262,151,261,3],[125,266,155,265,3],[127,270,157,269,3],
  [128,275,158,274,3],[129,280,158,279,3],[129,285,158,284,3],[128,290,160,289,4],[124,296,162,295,4],
  [120,302,159,301,4],[116,308,155,308,5],[111,314,151,315,5],[106,321,147,322,6],[98,329,145,330,7],
  [91,337,138,338,8],[84,347,138,347,9],[78,358,137,358,10],[73,371,136,369,11],[71,385,137,378,12],
  [72,403,143,391,13],[79,424,152,405,14],[94,447,167,419,15],[119,475,184,438,15],[155,502,212,455,16],[203,530,250,466,15]
];
for (const [x1, y1, x2, y2, h] of ties) {
  const ux = x2 - x1, uy = y2 - y1, b = h * 0.15;
  const path = o => `M${x1} ${y1 + o}C${x1 + ux * .3} ${y1 + uy * .3 + o - b},${x1 + ux * .35} ${y1 + uy * .35 + o + b},${x1 + ux * .5} ${y1 + uy * .5 + o + b}S${x1 + ux * .75} ${y1 + uy * .75 + o - b},${x2} ${y2 + o}`;
  add(sc, 'path', { d: path(h * 0.26), fill: 'none', stroke: y1 < 300 ? '#686663' : '#88817a', 'stroke-width': h * 0.7 });
  add(sc, 'path', { d: path(-h * 0.1), fill: 'none', stroke: y1 < 300 ? '#92908c' : '#aca59d', 'stroke-width': h * 0.6 });
}
add(sc, 'path', { d: 'M140 262C150 290 140 305 128 325C105 360 98 390 115 412C135 445 180 475 225 494', fill: 'none', stroke: '#111', 'stroke-width': 0.8, 'stroke-dasharray': '9 5' });

/* Rails: tapered ribbons through control points */
const rails = [
  [[115,255],[128,263],[135,276],[132,290],[117,310],[100,330],[88,350],[82.5,373],[87,400],[97,420],[113,438],[143,462],[173,482],[215,505]],
  [[127,253],[143,260],[153,268],[157,280],[153,293],[143,307],[132,327],[125,350],[125,375],[132,393],[147,410],[173,427],[200,443],[245,465]]
];
const spline = p => {
  const out = [];
  for (let i = 0; i < p.length - 1; i++) {
    const a = p[Math.max(i - 1, 0)], b = p[i], c = p[i + 1], d = p[Math.min(i + 2, p.length - 1)];
    for (let t = 0; t < 1; t += 0.125) {
      out.push([0, 1].map(k => 0.5 * (2 * b[k] + (c[k] - a[k]) * t + (2 * a[k] - 5 * b[k] + 4 * c[k] - d[k]) * t * t + (3 * b[k] - a[k] - 3 * c[k] + d[k]) * t ** 3)));
    }
  }
  out.push(p[p.length - 1]);
  return out;
};
const ribbon = (pts, scale, dx, dy, fill) => {
  const l = [], r = [];
  pts.forEach(([x, y], i) => {
    const a = pts[Math.max(i - 1, 0)], b = pts[Math.min(i + 1, pts.length - 1)];
    const len = Math.hypot(b[0] - a[0], b[1] - a[1]);
    const full = 1.5 + (y - 253) * 0.031, w = full * scale / 2;
    const nx = -(b[1] - a[1]) / len * w, ny = (b[0] - a[0]) / len * w;
    const cx = x + dx * full, cy = y + dy * full;
    l.push(`${cx + nx} ${cy + ny}`);
    r.unshift(`${cx - nx} ${cy - ny}`);
  });
  add(sc, 'path', { d: 'M' + l.concat(r).join('L') + 'Z', fill });
};
for (const rail of rails) {
  const pts = spline(rail);
  ribbon(pts, 0.9, 0.12, 0.5, '#55301f');
  ribbon(pts, 0.8, 0.1, 0.2, '#201713');
  ribbon(pts, 0.5, 0, -0.1, '#8c979d');
  ribbon(pts, 0.2, -0.05, -0.15, '#dbe4e8');
}
for (const [x, y] of [[241,470],[213,513],[205,452],[167,486],[177,435],[133,461],[154,419],[107,438],[138,403],[92,415]]) {
  add(sc, 'circle', { cx: x, cy: y, r: 1.5, fill: '#c9ccce' });
}
/* 3D cursor */
add(sc, 'circle', { cx: 139, cy: 300, r: 4.5, fill: 'none', stroke: '#fff', 'stroke-width': 1 });
add(sc, 'circle', { cx: 139, cy: 300, r: 4.5, fill: 'none', stroke: '#e03c3c', 'stroke-width': 1, 'stroke-dasharray': '2.5 2.5' });
add(sc, 'path', { d: 'M139 292v5M139 303v7M131 300h5M142 300h6', stroke: '#151515', 'stroke-width': 1 });
add(sc, 'circle', { cx: 139, cy: 301, r: 1.2, fill: '#f0a030' });

/* Node graph */
const g = document.getElementById('graph');
for (let x = 391; x < 980; x += 60) for (let y = 51; y < 570; y += 60) add(g, 'circle', { cx: x, cy: y, r: 0.7, fill: '#262626' });
add(g, 'rect', { x: 552, y: 421, width: 71, height: 85, fill: '#0f0f0f' });
add(g, 'path', { d: 'M583 423.5h9', stroke: '#eee', 'stroke-width': 1.4 });
const G = '#12c795', W = '#b4b4b4', B = '#5258c8', P = '#7b4a94', D = '#8a7d80';
const link = (x1, y1, x2, y2, c, w = 1.6) => {
  const k = Math.abs(x2 - x1) * 0.45;
  add(g, 'path', { d: `M${x1} ${y1}C${x1 + k} ${y1},${x2 - k} ${y2},${x2} ${y2}`, fill: 'none', stroke: c, 'stroke-width': w });
};
const straight = (x1, y1, x2, y2) => add(g, 'line', { x1, y1, x2, y2, stroke: G, 'stroke-width': 1.6 });
[
  [401,227,441,227,W],[401,227,415,246,W],[432,237,441,246,W],
  [458,225,477,223,B],[458,242,477,236,B],[459,271,477,226,G],[459,271,477,238,G],
  [496,224,504,230,G],[496,236,504,230,G],[521,230,528,230,G],
  [545,224,575,224,G],[545,229,575,229,G],[545,232,575,236,P,1],
  [489,343,528,344,W],[489,343,502,362,W],[519,352,529,361,W],
  [545,341,564,339,B],[546,358,564,353,B],[547,387,564,341,G],[547,387,564,354,G],
  [584,340,591,345,G],[583,352,591,345,G],[608,345,612,341,G],
  [606,331,611,322,D,1],[606,331,612,344,D,1],[627,319,644,323,G],[629,340,644,325,G],[627,324,639,357,D,1],[629,346,639,360,D,1],
  [661,320,666,345,G],[656,354,667,352,B,1],[685,344,689,362,G],[706,361,714,397,G],
  [671,353,714,398,G],[619,429,714,398,G],[730,397,766,397,G],
  [547,414,556,449,G],[547,416,556,450,W,1],[573,433,602,433,G],[573,440,602,446,P,1],[574,477,579,468,G],[598,468,603,438,G]
].forEach(l => link(...l));
straight(484, 323, 611, 319);
straight(547, 414.5, 700, 399);
straight(699, 399, 714, 398);
add(g, 'path', { d: 'M592 220C630 220 640 283 655 317M661 318C664 333 669 345 671 353', fill: 'none', stroke: G, 'stroke-width': 1.6 });

const C = { g: '#1c8062', b: '#27617d', r: '#a32e51', i: '#3a3f80', n: '#303030' };
const node = (x, y, w, h, type, full, sel) => {
  add(g, 'rect', { x, y, width: w, height: h, rx: 0.8, fill: full ? '#1d8a6b' : '#353535', stroke: sel ? '#fff' : '#505050', 'stroke-width': sel ? 1.2 : 0.5 });
  if (!sel) add(g, 'rect', { x, y, width: w, height: 2.4, fill: C[type] });
  add(g, 'path', { d: `M${x + 4} ${y + 1.3}h${w - 9}`, stroke: '#d0d0d0', 'stroke-width': 0.6, opacity: 0.55, 'stroke-dasharray': '1.5 .5' });
  for (let k = 0, r = y + 4.5; r < y + h - 1; r += 2.5, k++) {
    const low = h > 13.5 && r > y + h * 0.68;
    if (low) add(g, 'rect', { x: x + 1.5, y: r - 0.8, width: w - 3, height: 1.7, fill: '#4e4e4e' });
    else add(g, 'path', { d: k % 3 ? `M${x + 2} ${r}h${w * 0.35}` : `M${x + w * 0.5} ${r}h${w * 0.38}`, stroke: full ? '#5fd0b0' : '#c4c4c4', 'stroke-width': 0.7, opacity: 0.65, 'stroke-dasharray': '2 .5' });
  }
};
[
  [354.5,199,16.5,13.5,'n',0,1],[384.5,222.5,16.5,6,'r'],[415,233,17,18,'b'],[441,221,17,14.5,'b'],[441,238,17,14.5,'b'],[443,256,16.5,24.5,'r'],
  [477,221,19,7,'g',1],[477,233,19,7,'g',1],[504,225.5,17,6,'g'],[528,219,17,22.5,'g'],[575,216,17,31,'g'],
  [467,319,17,13.5,'n'],[472,339,17,5.5,'r'],[502,348,17,18,'b'],[528,336,17,14.5,'b'],[529,354,17,14,'b'],[530,371,17,25,'r'],
  [564,336,20,7,'g',1],[564,349,19,7,'g',1],[591,341,17,6,'g'],[589,324,17,11.5,'r'],[610,311,17,17,'i'],[612,332,17,17,'i'],[644,315,17,17,'g'],
  [639,349,17,14,'b'],[666,334,19,20,'i'],[689,357,17,11,'g'],[713,393,17,6.5,'g'],[765,392.5,17,8.5,'n'],
  [529,410,17,13.5,'n'],[556,428,17,23,'g'],[602,425,17,32,'g'],[557,463,17,25,'r'],[579,464,19,39,'g']
].forEach(n => node(...n));
/* Highlighted links from the selected node run above the others */
link(371, 203, 528, 237, '#9fe8d0', 1.7);
link(371, 208, 528, 240, '#a89ea0', 1);
```
